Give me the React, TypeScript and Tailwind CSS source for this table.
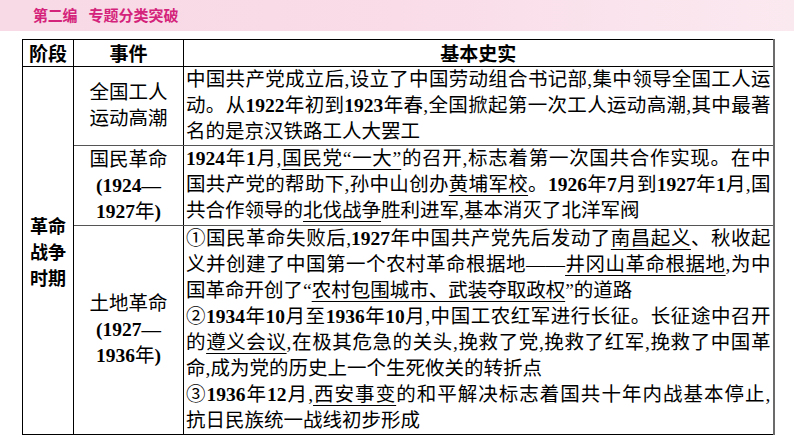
import React from "react";

const serif = "font-['Liberation_Serif','Noto_Sans_CJK_SC',serif]";
const hei = "font-['Noto_Sans_CJK_SC',sans-serif]";

function Line({
  full,
  children,
}: {
  full?: boolean;
  children: React.ReactNode;
}) {
  return (
    <div
      className={
        full ? "h-[26px] text-justify [text-align-last:justify]" : "h-[26px]"
      }
    >
      {children}
    </div>
  );
}

function U({ children }: { children: React.ReactNode }) {
  return (
    <span className="underline decoration-1 underline-offset-[4px]">
      {children}
    </span>
  );
}

export default function App() {
  return (
    <div className="w-[794px] h-[447px] bg-white overflow-hidden text-black">
      <div className="h-[31px] bg-gradient-to-r from-[#f8d9e6] via-[#f9dce8] to-[#fbe9f0] flex items-center pl-[33px]">
        <span
          className={`${hei} text-[15px] font-bold text-[#d4237a] tracking-[-0.2px]`}
        >
          第二编
        </span>
        <span
          className={`${hei} text-[15px] font-bold text-[#d4237a] ml-[11px]`}
        >
          专题分类突破
        </span>
      </div>

      <table
        className={`${serif} ml-[22px] mt-[8px] table-fixed border-collapse text-[19.5px] leading-[26px]`}
      >
        <colgroup>
          <col className="w-[51px]" />
          <col className="w-[110px]" />
          <col className="w-[590px]" />
        </colgroup>
        <thead>
          <tr className="h-[27px]">
            <th
              className={`${hei} border border-black text-[19px] font-bold leading-[26px] text-center`}
            >
              阶段
            </th>
            <th
              className={`${hei} border border-black text-[19px] font-bold leading-[26px] text-center`}
            >
              事件
            </th>
            <th
              className={`${hei} border border-black border-r-2 border-r-[#6b6b6b] text-[19px] font-bold leading-[26px] text-center`}
            >
              基本史实
            </th>
          </tr>
        </thead>
        <tbody>
          <tr className="h-[78px]">
            <td
              rowSpan={3}
              className={`${hei} border border-black text-center align-middle text-[18px] font-bold leading-[26px]`}
            >
              革命
              <br />
              战争
              <br />
              时期
            </td>
            <td className="border border-black border-b-[#555] text-center align-middle">
              全国工人
              <br />
              运动高潮
            </td>
            <td className="border border-black border-b-[#555] border-r-2 border-r-[#6b6b6b] align-top pl-[2px] pr-[2px]">
              <Line full>
                中国共产党成立后,设立了中国劳动组合书记部,集中领导全国工人运
              </Line>
              <Line full>
                动。从<b>1922</b>年初到<b>1923</b>
                年春,全国掀起第一次工人运动高潮,其中最著
              </Line>
              <Line>名的是京汉铁路工人大罢工</Line>
            </td>
          </tr>

          <tr className="h-[80px]">
            <td className="border border-black border-b-[#555] text-center align-middle">
              国民革命
              <br />
              <b>(1924—</b>
              <br />
              <b>1927</b>年<b>)</b>
            </td>
            <td className="border border-black border-b-[#555] border-r-2 border-r-[#6b6b6b] align-top pl-[2px] pr-[2px]">
              <Line full>
                <b>1924</b>年<b>1</b>月,<U>国民党“一大”</U>
                的召开,标志着第一次国共合作实现。在中
              </Line>
              <Line full>
                国共产党的帮助下,孙中山创办<U>黄埔军校</U>。<b>1926</b>年
                <b>7</b>月到<b>1927</b>年<b>1</b>月,国
              </Line>
              <Line>
                共合作领导的<U>北伐战争</U>胜利进军,基本消灭了北洋军阀
              </Line>
            </td>
          </tr>

          <tr className="h-[209px]">
            <td className="border border-black text-center align-middle">
              土地革命
              <br />
              <b>(1927—</b>
              <br />
              <b>1936</b>年<b>)</b>
            </td>
            <td className="border border-black border-r-2 border-r-[#6b6b6b] align-top pl-[2px] pr-[2px]">
              <Line full>
                ①国民革命失败后,<b>1927</b>年中国共产党先后发动了
                <U>南昌起义</U>、秋收起
              </Line>
              <Line full>
                义并创建了中国第一个农村革命根据地——<U>井冈山革命根据地</U>
                ,为中
              </Line>
              <Line>
                国革命开创了“<U>农村包围城市、武装夺取政权</U>”的道路
              </Line>
              <Line full>
                ②<b>1934</b>年<b>10</b>月至<b>1936</b>年<b>10</b>
                月,中国工农红军进行长征。长征途中召开
              </Line>
              <Line full>
                的<U>遵义会议</U>
                ,在极其危急的关头,挽救了党,挽救了红军,挽救了中国革
              </Line>
              <Line>命,成为党的历史上一个生死攸关的转折点</Line>
              <Line full>
                ③<b>1936</b>年<b>12</b>月,<U>西安事变</U>
                的和平解决标志着国共十年内战基本停止,
              </Line>
              <Line>抗日民族统一战线初步形成</Line>
            </td>
          </tr>
        </tbody>
      </table>
    </div>
  );
}
